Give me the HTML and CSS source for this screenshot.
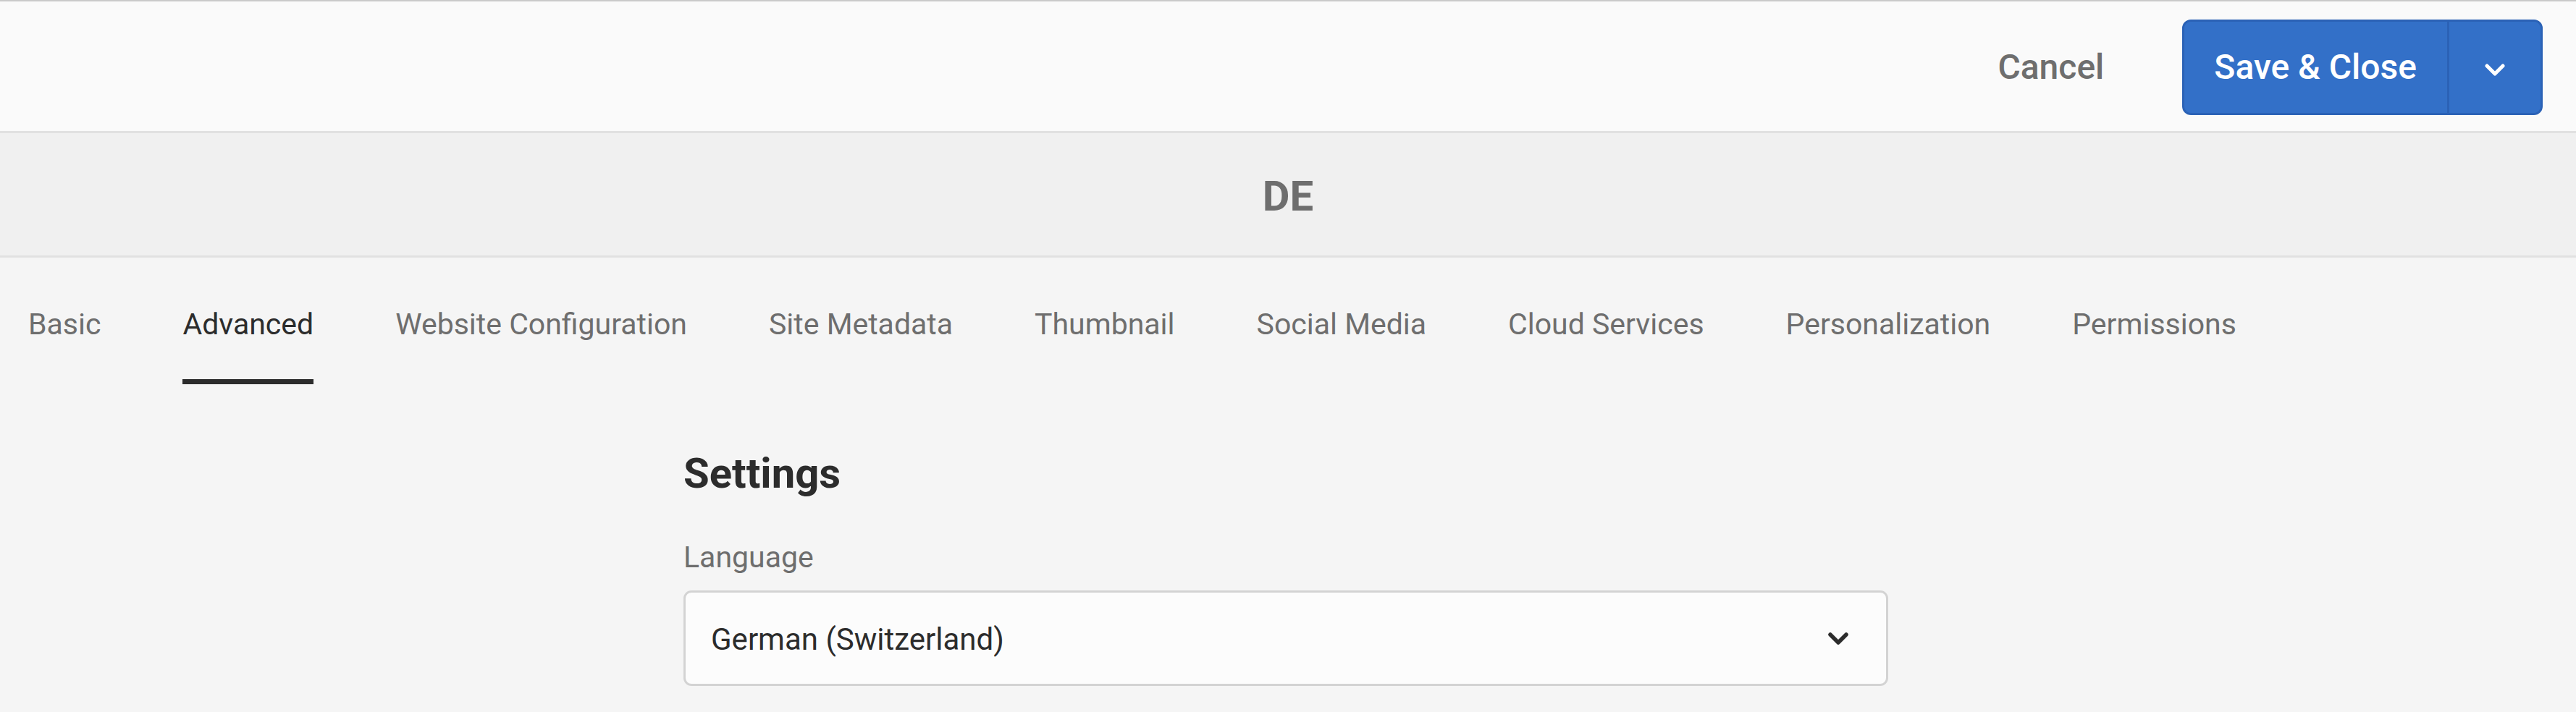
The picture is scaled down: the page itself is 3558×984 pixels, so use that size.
FILE: index.html
```html
<!DOCTYPE html>
<html lang="en">
<head>
<meta charset="utf-8">
<title>DE - Properties</title>
<link rel="stylesheet" href="styles.css">
</head>
<body>
<header class="topbar">
  <div class="actions">
    <button class="btn-quiet" type="button">Cancel</button>
    <div class="split">
      <button class="btn-primary" type="button">Save &amp; Close</button>
      <button class="btn-toggle" type="button" aria-label="More">
        <svg class="chev-white" viewBox="0 0 28 17" width="28" height="17"><polyline points="3,3 14,14 25,3" fill="none" stroke="#ffffff" stroke-width="5" stroke-linecap="round" stroke-linejoin="round"/></svg>
      </button>
    </div>
  </div>
</header>
<div class="titlebar"><h1 class="title">DE</h1></div>
<main class="main">
  <nav class="tabs">
    <a class="tab">Basic</a>
    <a class="tab active">Advanced</a>
    <a class="tab">Website Configuration</a>
    <a class="tab">Site Metadata</a>
    <a class="tab">Thumbnail</a>
    <a class="tab">Social Media</a>
    <a class="tab">Cloud Services</a>
    <a class="tab">Personalization</a>
    <a class="tab">Permissions</a>
  </nav>
  <div class="form-wrap">
    <section class="form">
      <h2 class="section-title">Settings</h2>
      <label class="field-label">Language</label>
      <div class="select">
        <span class="select-value">German (Switzerland)</span>
        <svg class="chev" viewBox="0 0 28 17" width="28" height="17"><polyline points="3,3 14,14 25,3" fill="none" stroke="#2c2c2c" stroke-width="5.5" stroke-linecap="round" stroke-linejoin="round"/></svg>
      </div>
    </section>
  </div>
</main>
</body>
</html>
```
FILE: styles.css
```css
* { box-sizing: border-box; }
html, body { margin: 0; padding: 0; }
body {
  font-family: Roboto, "Open Sans", sans-serif;
  background: #f5f5f5;
  color: #2c2c2c;
  min-height: 984px;
}
.topbar {
  border-top: 2px solid #cacaca;
  border-bottom: 3px solid #e1e1e1;
  background: #fafafa;
  padding: 25px 46px 22px 0;
  display: flex;
  justify-content: flex-end;
}
.actions {
  display: flex;
  align-items: center;
}
.btn-quiet {
  font-family: inherit;
  font-size: 48px;
  font-weight: 500;
  color: #6e6e6e;
  background: none;
  border: 0;
  padding: 0;
  margin-right: 108px;
  line-height: 60px;
}
.split {
  display: flex;
  height: 132px;
  border: 3px solid #2b62b6;
  border-radius: 12px;
  background: #3370c8;
  overflow: hidden;
}
.btn-primary {
  font-family: inherit;
  font-size: 48px;
  font-weight: 500;
  color: #ffffff;
  background: #3370c8;
  border: 0;
  border-right: 3px solid #2b62b6;
  padding: 0 42px 0 41px;
  line-height: 60px;
}
.btn-toggle {
  width: 126px;
  background: #3370c8;
  border: 0;
  padding: 0;
  display: flex;
  align-items: center;
  justify-content: center;
}
.chev-white { display: block; margin-top: 6px; }
.titlebar {
  height: 172px;
  background: #f0f0f0;
  border-bottom: 3px solid #e1e1e1;
  display: flex;
  align-items: center;
  justify-content: center;
  padding-top: 4px;
}
.title {
  margin: 0;
  font-size: 58px;
  font-weight: 700;
  color: #6e6e6e;
  line-height: 70px;
}
.main {
  background: #f5f5f5;
}
.tabs {
  display: flex;
  gap: 113px;
  padding: 64px 0 0 39px;
}
.tab {
  font-size: 41px;
  line-height: 56px;
  color: #6e6e6e;
  padding-bottom: 48px;
  border-bottom: 7px solid transparent;
}
.tab.active {
  color: #2c2c2c;
  border-bottom-color: #2c2c2c;
}
.form-wrap {
  padding-right: 6px;
}
.form {
  width: 1664px;
  margin: 0 auto;
  padding-top: 88px;
  display: flex;
  flex-direction: column;
}
.section-title {
  margin: 0;
  font-size: 58px;
  font-weight: 700;
  line-height: 70px;
  color: #2c2c2c;
}
.field-label {
  margin-top: 53px;
  font-size: 41px;
  line-height: 56px;
  color: #6e6e6e;
}
.select {
  margin-top: 18px;
  height: 132px;
  border: 3px solid #d3d3d3;
  border-radius: 11px;
  background: #fcfcfc;
  display: flex;
  align-items: center;
  justify-content: space-between;
  padding: 4px 52px 0 35px;
}
.select-value {
  font-size: 42px;
  line-height: 56px;
  color: #2c2c2c;
}
.chev { display: block; margin-top: -4px; }
```
